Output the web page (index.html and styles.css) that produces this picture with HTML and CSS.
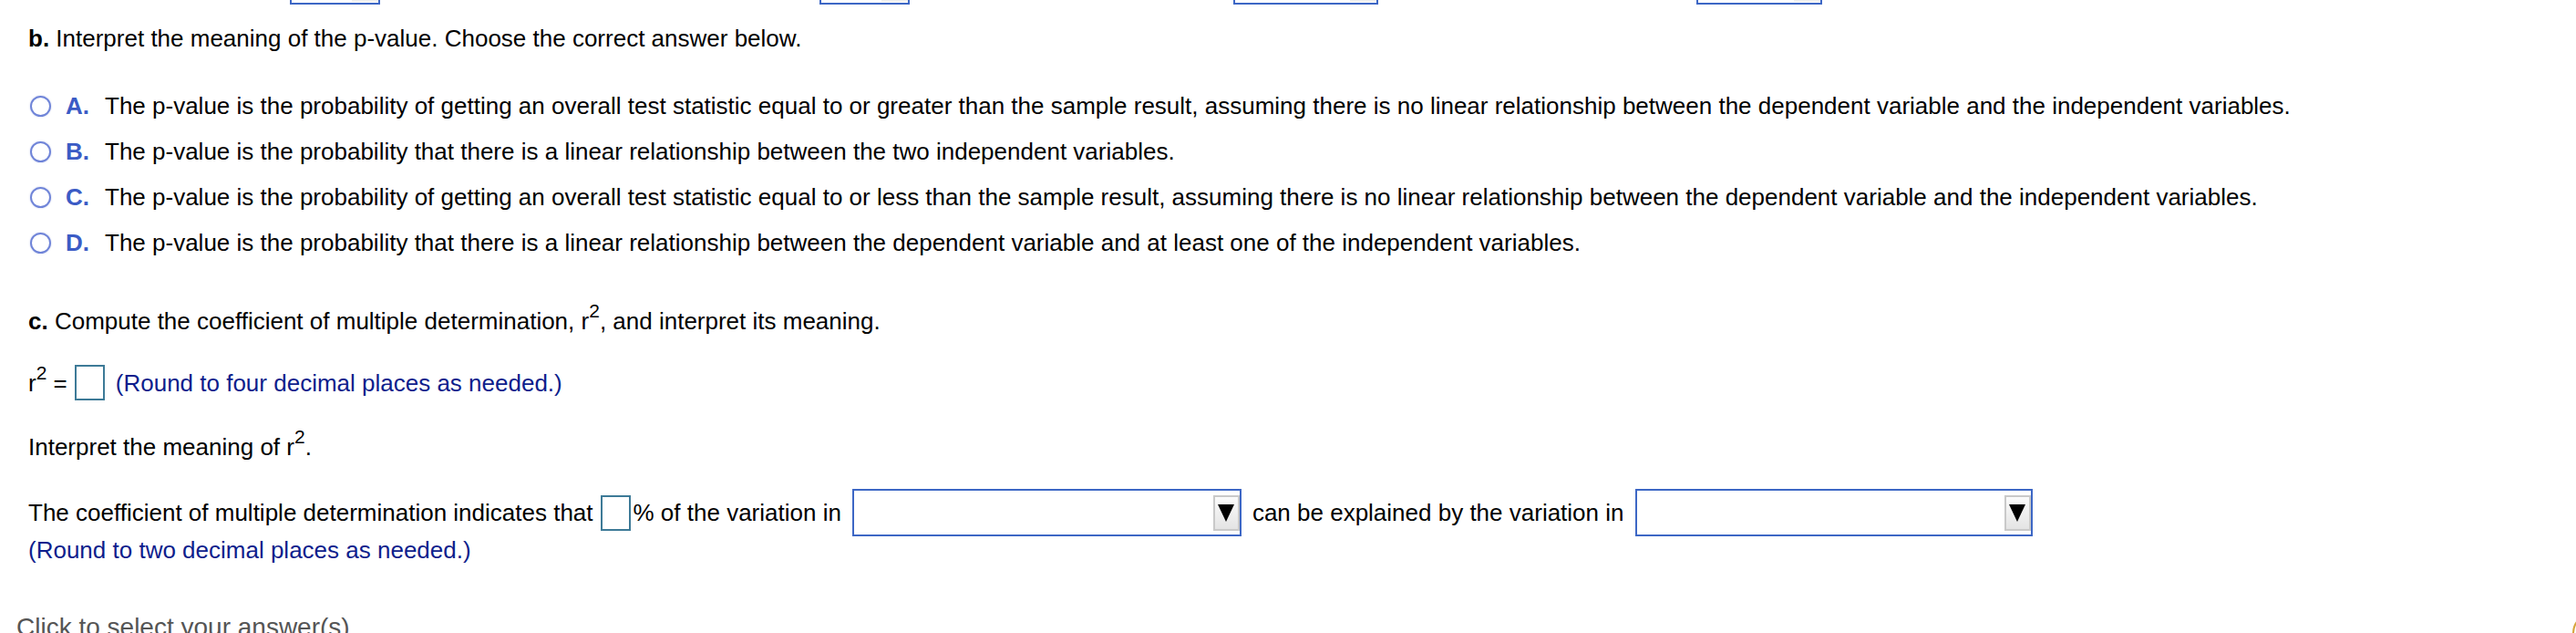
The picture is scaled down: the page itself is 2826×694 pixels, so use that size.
FILE: index.html
```html
<!DOCTYPE html>
<html>
<head>
<meta charset="utf-8">
<title>Question</title>
<link rel="stylesheet" href="styles.css">
</head>
<body>
<div class="page">
  <div class="topstrip">
    <div class="tbox tb1"><span class="tbtn"></span></div>
    <div class="tbox tb2"><span class="tbtn"></span></div>
    <div class="tbox tb3"><span class="tbtn"></span></div>
    <div class="tbox tb4"><span class="tbtn"></span></div>
  </div>
  <div class="content">
    <p class="qb"><b>b.</b> Interpret the meaning of the p-value. Choose the correct answer below.</p>
    <ul class="opts">
      <li class="opt"><span class="radio"></span><span class="lbl">A.</span><span class="txt">The p-value is the probability of getting an overall test statistic equal to or greater than the sample result, assuming there is no linear relationship between the dependent variable and the independent variables.</span></li>
      <li class="opt"><span class="radio"></span><span class="lbl">B.</span><span class="txt">The p-value is the probability that there is a linear relationship between the two independent variables.</span></li>
      <li class="opt"><span class="radio"></span><span class="lbl">C.</span><span class="txt">The p-value is the probability of getting an overall test statistic equal to or less than the sample result, assuming there is no linear relationship between the dependent variable and the independent variables.</span></li>
      <li class="opt"><span class="radio"></span><span class="lbl">D.</span><span class="txt">The p-value is the probability that there is a linear relationship between the dependent variable and at least one of the independent variables.</span></li>
    </ul>
    <p class="qc"><b>c.</b> Compute the coefficient of multiple determination, r<sup>2</sup>, and interpret its meaning.</p>
    <div class="r2row"><span class="lhs">r<sup>2</sup> =</span><span class="inbox"></span><span class="hint">(Round to four decimal places as needed.)</span></div>
    <p class="qi">Interpret the meaning of r<sup>2</sup>.</p>
    <div class="coef">
      <span class="seg">The coefficient of multiple determination indicates that</span>
      <span class="inbox"></span>
      <span class="seg">% of the variation in</span>
      <span class="dd dd1"><span class="ddbtn"><span class="tri"></span></span></span>
      <span class="seg">can be explained by the variation in</span>
      <span class="dd dd2"><span class="ddbtn"><span class="tri"></span></span></span>
    </div>
    <p class="hint round2">(Round to two decimal places as needed.)</p>
    <p class="click">Click to select your answer(s)</p>
  </div>
  <div class="help"></div>
</div>
</body>
</html>
```

FILE: styles.css
```css
html, body {
  margin: 0;
  padding: 0;
  background: #ffffff;
  overflow: hidden;
}

.page {
  position: relative;
  width: 2826px;
  height: 694px;
  overflow: hidden;
  font-family: "Liberation Sans", Arial, Helvetica, sans-serif;
  font-size: 26px;
  line-height: 30px;
  color: #000000;
}

/* bottoms of dropdowns scrolled off the top */
.topstrip {
  display: flex;
  align-items: flex-end;
  height: 5px;
  overflow: hidden;
}

.tbox {
  flex: none;
  height: 40px;
  box-sizing: border-box;
  border: 2px solid #3d67c5;
  display: flex;
  justify-content: flex-end;
  align-items: flex-end;
}

.tb1 { margin-left: 318px; width: 99px; }
.tb2 { margin-left: 482px; width: 99px; }
.tb3 { margin-left: 355px; width: 159px; }
.tb4 { margin-left: 349px; width: 138px; }

.tbtn {
  width: 29px;
  height: 10px;
  margin-bottom: 1px;
  background: linear-gradient(#fafafa, #ededed);
}

.content {
  padding-left: 31px;
}

.qb {
  margin: 22px 0 0;
  white-space: nowrap;
}

.opts {
  list-style: none;
  margin: 34px 0 0;
  padding: 0;
}

.opt {
  display: flex;
  align-items: center;
  height: 50px;
  white-space: nowrap;
}

.radio {
  flex: none;
  width: 23px;
  height: 23px;
  box-sizing: border-box;
  margin-left: 2px;
  border: 2px solid #6f84d8;
  border-radius: 50%;
  box-shadow: 0 0 2px rgba(90, 110, 200, 0.4);
}

.lbl {
  flex: none;
  width: 43px;
  margin-left: 16px;
  font-weight: bold;
  color: #3b5bc5;
}

.qc {
  margin: 46px 0 0;
  white-space: nowrap;
}

sup {
  font-size: 21px;
  line-height: 0;
  vertical-align: 13px;
}

.r2row {
  display: flex;
  align-items: center;
  height: 39px;
  margin-top: 33px;
  white-space: nowrap;
}

.inbox {
  flex: none;
  width: 33px;
  height: 39px;
  box-sizing: border-box;
  border: 2px solid #3d7a97;
}

.r2row .inbox {
  margin-left: 8px;
}

.hint {
  color: #0e1e8c;
}

.r2row .hint {
  margin-left: 12px;
}

.qi {
  margin: 36px 0 0;
  white-space: nowrap;
}

.coef {
  display: flex;
  align-items: center;
  height: 52px;
  margin-top: 31px;
  white-space: nowrap;
}

.coef .inbox {
  margin-left: 8px;
  margin-right: 3px;
}

.dd {
  flex: none;
  height: 52px;
  box-sizing: border-box;
  border: 2px solid #3d67c5;
  display: flex;
  justify-content: flex-end;
  align-items: center;
  margin-left: 12px;
  margin-right: 12px;
}

.dd1 { width: 427px; }
.dd2 { width: 436px; }

.ddbtn {
  width: 29px;
  height: 39px;
  box-sizing: border-box;
  border: 2px solid #c9c9c9;
  background: linear-gradient(#fbfbfb, #e4e4e4);
  display: flex;
  align-items: center;
  justify-content: center;
}

.tri {
  width: 0;
  height: 0;
  border-left: 9px solid transparent;
  border-right: 9px solid transparent;
  border-top: 19px solid #000000;
}

.round2 {
  margin: 0;
  white-space: nowrap;
}

.click {
  margin: 53px 0 0 -13px;
  font-size: 28px;
  line-height: 34px;
  color: #555555;
  white-space: nowrap;
}

.help {
  position: absolute;
  left: 2822px;
  top: 672px;
  width: 44px;
  height: 44px;
  box-sizing: border-box;
  border: 2px solid #d6a43c;
  border-radius: 50%;
}
```
